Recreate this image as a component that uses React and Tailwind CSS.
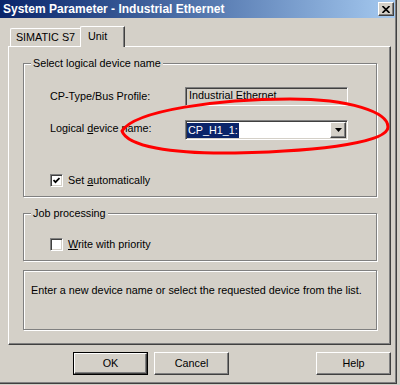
import React from "react";

const raised =
  "bg-[#D4D0C8] border border-t-white border-l-white border-r-[#404040] border-b-[#404040] shadow-[inset_-1px_-1px_0_#808080]";
const sunken =
  "border border-t-[#808080] border-l-[#808080] border-r-white border-b-white shadow-[inset_1px_1px_0_#404040,inset_-1px_-1px_0_#D4D0C8]";
const etched = "border border-[#808080] shadow-[inset_1px_1px_0_#fff,1px_1px_0_#fff]";

const CheckBox = ({ checked }) => (
  <div className={`w-[13px] h-[13px] bg-white flex items-center justify-center ${sunken}`}>
    {checked && (
      <svg width="7" height="7" viewBox="0 0 7 7">
        <path d="M0.5 3 L2.5 5.2 L6.5 1" fill="none" stroke="#000" strokeWidth="1.8" />
      </svg>
    )}
  </div>
);

const GroupBox = ({ title, className, children }) => (
  <div className={`relative ${etched} ${className}`}>
    {title && (
      <span className="absolute left-[7px] -top-[7px] px-[2px] bg-[#D4D0C8] leading-[13px]">
        {title}
      </span>
    )}
    {children}
  </div>
);

const Button = ({ label, isDefault }) => (
  <div className={`w-[75px] h-[23px] ${isDefault ? "border border-black" : ""}`}>
    <div className={`w-full h-full flex items-center justify-center ${raised}`}>{label}</div>
  </div>
);

export default function App() {
  return (
    <div className="relative w-[400px] h-[385px] overflow-hidden bg-[#D4D0C8] font-['Liberation_Sans',Arial,sans-serif] text-[10.8px] text-black">
      <div className="w-[397px] h-[384px] border-r border-b border-[#404040] shadow-[inset_-1px_-1px_0_#808080]">
        {/* title bar */}
        <div className="h-[18px] flex items-center bg-linear-to-r from-[#0A246A] to-[#A6CAF0] pl-[3px] mr-[1px]">
          <span className="text-white font-bold text-[12px]">
            System Parameter - Industrial Ethernet
          </span>
          <div className={`ml-auto mr-[1px] w-[16px] h-[14px] flex items-center justify-center ${raised}`}>
            <svg width="8" height="7" viewBox="0 0 8 7">
              <path d="M0.5 0 L7.5 7 M7.5 0 L0.5 7" stroke="#000" strokeWidth="1.6" />
            </svg>
          </div>
        </div>

        {/* tabs */}
        <div className="flex items-end h-[28px] pl-[10px]">
          <div className="w-[70px] h-[18px] flex items-center justify-center border-t border-l border-white rounded-tl-[2px]">
            SIMATIC S7
          </div>
          <div className="relative z-10 -mb-px w-[45px] h-[21px] flex items-center pl-[7px] pb-[1px] bg-[#D4D0C8] border-t border-l border-r border-t-white border-l-white border-r-[#404040] rounded-tl-[2px] shadow-[inset_-1px_0_0_#808080]">
            Unit
          </div>
        </div>

        {/* panel */}
        <div className={`ml-[8px] w-[383px] h-[299px] pl-[14px] pt-[16px] ${raised}`}>
          <GroupBox title="Select logical device name" className="w-[354px] h-[134px]">
            <div className="flex items-center mt-[23px] pl-[26px] h-[19px]">
              <span className="w-[135px]">CP-Type/Bus Profile:</span>
              <div className={`w-[163px] h-[19px] pl-[3px] leading-[15px] overflow-hidden ${sunken}`}>
                Industrial Ethernet
              </div>
            </div>
            <div className="flex items-center mt-[14px] pl-[26px] h-[20px]">
              <span className="w-[135px] -mt-[3px]">
                Logical <u>d</u>evice name:
              </span>
              <div className={`w-[163px] h-[20px] bg-white flex items-center pl-[1px] pr-[1px] ${sunken}`}>
                <span className="bg-[#0A246A] text-white px-[1px] leading-[15px]">CP_H1_1:</span>
                <div className={`ml-auto w-[16px] h-[16px] flex items-center justify-center ${raised}`}>
                  <svg width="7" height="4" viewBox="0 0 7 4">
                    <path d="M0 0 H7 L3.5 4 Z" fill="#000" />
                  </svg>
                </div>
              </div>
            </div>
            <div className="flex items-center mt-[32px] pl-[26px] gap-[5px]">
              <CheckBox checked />
              <span>
                Set <u>a</u>utomatically
              </span>
            </div>
          </GroupBox>

          <GroupBox title="Job processing" className="mt-[16px] w-[354px] h-[48px]">
            <div className="flex items-center mt-[22px] pl-[26px] gap-[5px]">
              <CheckBox />
              <span>
                <u>W</u>rite with priority
              </span>
            </div>
          </GroupBox>

          <GroupBox className="mt-[9px] w-[354px] h-[60px]">
            <p className="pl-[7px] pt-[11px]">
              Enter a new device name or select the requested device from the list.
            </p>
          </GroupBox>
        </div>

        {/* buttons */}
        <div className="flex mt-[7px] pl-[73px] gap-[6px]">
          <Button label="OK" isDefault />
          <Button label="Cancel" />
          <div className="ml-auto mr-[5px]">
            <Button label="Help" />
          </div>
        </div>
      </div>

      {/* red annotation */}
      <svg className="absolute inset-0 pointer-events-none" width="400" height="385">
        <path
          d="M122 131 C135 110 220 99 290 99 C350 99 388 112 388 127 C388 141 330 151 235 153 C170 154 127 146 122 131 Z"
          fill="none"
          stroke="#FF0000"
          strokeWidth="3"
        />
      </svg>
    </div>
  );
}
